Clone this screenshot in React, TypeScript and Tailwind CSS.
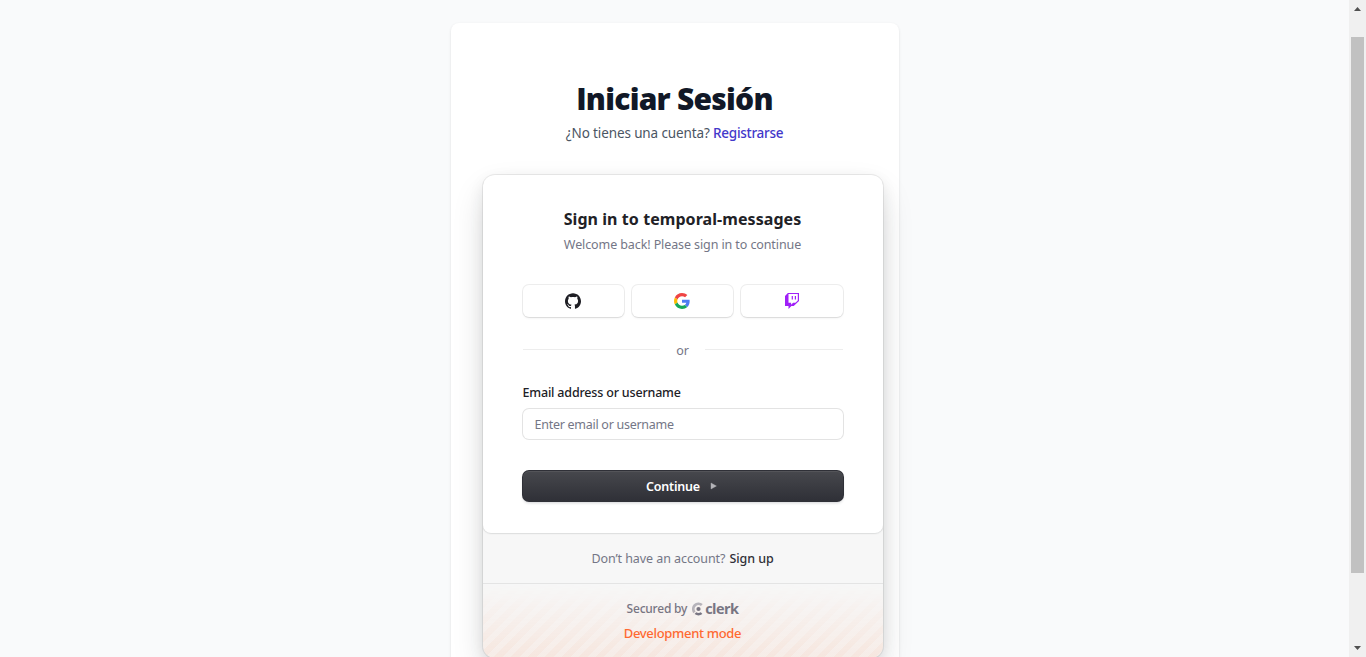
import React from "react";
import { SiGithub } from "react-icons/si";

function GoogleIcon() {
  return (
    <svg width="16" height="16" viewBox="0 0 48 48">
      <path fill="#EF4444" d="M24 9.5c3.54 0 6.71 1.22 9.21 3.6l6.85-6.85C35.9 2.38 30.47 0 24 0 14.62 0 6.51 5.38 2.56 13.22l7.98 6.19C12.43 13.72 17.74 9.5 24 9.5z" />
      <path fill="#4F7DF3" d="M46.98 24.55c0-1.57-.15-3.09-.38-4.55H24v9.02h12.94c-.58 2.96-2.26 5.48-4.78 7.18l7.73 6c4.51-4.18 7.09-10.36 7.09-17.65z" />
      <path fill="#FBBC05" d="M10.53 28.59c-.48-1.45-.76-2.99-.76-4.59s.27-3.14.76-4.59l-7.98-6.19C.92 16.46 0 20.12 0 24c0 3.88.92 7.54 2.56 10.78l7.97-6.19z" />
      <path fill="#16A85A" d="M24 48c6.48 0 11.93-2.13 15.89-5.81l-7.73-6c-2.15 1.45-4.92 2.3-8.16 2.3-6.26 0-11.57-4.22-13.47-9.91l-7.98 6.19C6.51 42.62 14.62 48 24 48z" />
    </svg>
  );
}

function TwitchIcon() {
  return (
    <svg width="16" height="16" viewBox="0 0 16 16" fill="#A020F8">
      <path fillRule="evenodd" d="M3.9 0 1 2.9v10.2h3.5V16l2.9-2.9h2.3L15 8V0H3.9Zm9.9 7.4-2.4 2.3H9.1l-2 2v-2H4.5V1.1h9.3v6.3Z" />
      <path d="M12 3.1h-1.2v3.5H12V3.1ZM8.9 3.1H7.7v3.5h1.2V3.1Z" />
    </svg>
  );
}

function ClerkLogo() {
  return (
    <span className="flex h-[14px] items-center gap-[2px] text-[#747686]">
      <svg width="11" height="14" viewBox="0 0 11 14">
        <path d="M9.84 3.02A5.2 5.2 0 0 0 2.52 10.34" fill="none" stroke="#b5b6be" strokeWidth="2.8" />
        <circle cx="6.5" cy="7" r="2.1" fill="currentColor" />
        <path d="M2.6 12 4.2 10.3a4.2 4.2 0 0 0 4.6 0l1.6 1.7a6.4 6.4 0 0 1-7.8 0Z" fill="currentColor" />
      </svg>
      <span className="mb-[1px] font-['Open_Sans',sans-serif] text-[14.5px] leading-[14px] font-bold tracking-[-0.55px]">clerk</span>
    </span>
  );
}

function SocialButton({ children }: { children: React.ReactNode }) {
  return (
    <button className="flex h-8 items-center justify-center rounded-md bg-white shadow-[0_0_0_1px_rgba(0,0,0,0.07),0_2px_3px_-1px_rgba(0,0,0,0.08),0_1px_0_0_rgba(0,0,0,0.02)]">
      {children}
    </button>
  );
}

function SignInCard() {
  return (
    <section className="flex w-[400px] flex-col overflow-hidden rounded-xl bg-[#f7f7f7] shadow-[0_5px_15px_0_rgba(0,0,0,0.08),0_15px_35px_-5px_rgba(25,28,33,0.2),0_0_0_1px_rgba(0,0,0,0.07)]">
      <div className="flex h-[358px] flex-col rounded-b-lg bg-white px-10 pt-8 shadow-[0_0_2px_0_rgba(0,0,0,0.08),0_1px_2px_0_rgba(25,28,33,0.06),0_0_0_1px_rgba(0,0,0,0.03)]">
        <h2 className="text-center text-[16px] leading-6 font-bold tracking-[0.07px] whitespace-nowrap text-[#212126]">Sign in to temporal-messages</h2>
        <p className="mt-[2px] text-center text-[12.5px] leading-6 tracking-[-0.1px] whitespace-nowrap text-[#747686]">Welcome back! Please sign in to continue</p>
        <div className="mt-7 grid grid-cols-3 gap-2">
          <SocialButton><SiGithub size={16} color="#1e1e24" /></SocialButton>
          <SocialButton><GoogleIcon /></SocialButton>
          <SocialButton><TwitchIcon /></SocialButton>
        </div>
        <div className="mt-6 flex h-[18px] items-center">
          <span className="mb-[1px] h-px flex-1 bg-[#ededed]" />
          <span className="mx-4 pt-[2px] text-[12.5px] leading-[18px] text-[#747686]">or</span>
          <span className="mb-[1px] h-px flex-1 bg-[#ededed]" />
        </div>
        <label className="mt-[25px] text-[12.5px] leading-[18px] font-medium tracking-[-0.18px] text-[#212126]">Email address or username</label>
        <input
          className="mt-[7px] h-[30px] rounded-md bg-white px-3 text-[12.5px] tracking-[-0.27px] text-[#212126] shadow-[0_0_0_1px_rgba(0,0,0,0.11)] outline-none placeholder:text-[#747686]"
          placeholder="Enter email or username"
        />
        <button className="mt-8 flex h-[30px] items-center justify-center gap-[9px] rounded-md bg-[#2f3037] bg-linear-to-b from-[#47484d] to-[#2f3037] text-[12.5px] font-semibold tracking-[-0.22px] text-white shadow-[0_0_0_1px_#2f3037,inset_0_1px_0_0_rgba(255,255,255,0.07),0_2px_3px_0_rgba(34,42,53,0.2)]">
          <span className="pt-[2px]">Continue</span>
          <svg width="10" height="10" viewBox="0 0 10 10"><path d="M2 2v6L7.4 5Z" fill="#b4b4b8" stroke="#b4b4b8" strokeWidth=".4" /></svg>
        </button>
      </div>
      <div className="flex h-[51px] items-center justify-center gap-1 border-b border-[#e4e4e4] pt-[2px] text-[12.5px] tracking-[-0.07px] whitespace-nowrap">
        <span className="text-[#747686]">Don’t have an account?</span>
        <a className="font-medium text-[#2f3037]">Sign up</a>
      </div>
      <div className="grid h-[74px]">
        <div className="col-start-1 row-start-1 bg-[repeating-linear-gradient(-45deg,rgba(248,105,35,0.07)_0px,rgba(248,105,35,0.07)_6px,rgba(248,105,35,0.11)_6px,rgba(248,105,35,0.11)_12px)] [mask-image:linear-gradient(transparent,black)]" />
        <div className="col-start-1 row-start-1 flex flex-col items-center pt-4">
          <div className="flex h-[18px] items-center gap-[5px] text-[12px] font-medium tracking-[-0.22px] text-[#747686]">
            <span>Secured by</span>
            <ClerkLogo />
          </div>
          <p className="mt-[6px] text-[13px] leading-[18px] font-medium tracking-[-0.32px] text-[#ff6a33]">Development mode</p>
        </div>
      </div>
    </section>
  );
}

function Scrollbar() {
  return (
    <div className="flex h-full w-[17px] shrink-0 flex-col items-center bg-[#f0f0f0]">
      <svg width="17" height="17" viewBox="0 0 17 17"><path d="M5 11 8.5 7l3.5 4Z" fill="#505050" /></svg>
      <div className="mt-5 h-[536px] w-[13px] bg-[#c1c1c1]" />
      <svg className="mt-auto" width="17" height="17" viewBox="0 0 17 17"><path d="M5 6l3.5 4L12 6Z" fill="#505050" /></svg>
    </div>
  );
}

export default function App() {
  return (
    <div className="flex h-[657px] w-[1366px] overflow-hidden bg-[#f9fafb] font-['Noto_Sans','Open_Sans',sans-serif]">
      <main className="flex flex-1 items-start justify-center pt-[23px]">
        <div className="h-[700px] w-[448px] rounded-lg bg-white px-8 pt-14 shadow-[0_1px_3px_0_rgba(0,0,0,0.1),0_1px_2px_-1px_rgba(0,0,0,0.1)]">
          <h1 className="text-center font-['Open_Sans',sans-serif] text-[30px] leading-10 font-extrabold tracking-[-0.025em] text-[#111827]">Iniciar Sesión</h1>
          <p className="mt-1 mb-[32px] text-center text-[13.5px] leading-5 tracking-[-0.18px] whitespace-nowrap text-[#4b5563]">
            <span className="tracking-[-0.12px]">¿No tienes una cuenta? </span>
            <a className="font-medium tracking-[-0.28px] text-[#4338ca]">Registrarse</a>
          </p>
          <SignInCard />
        </div>
      </main>
      <Scrollbar />
    </div>
  );
}
